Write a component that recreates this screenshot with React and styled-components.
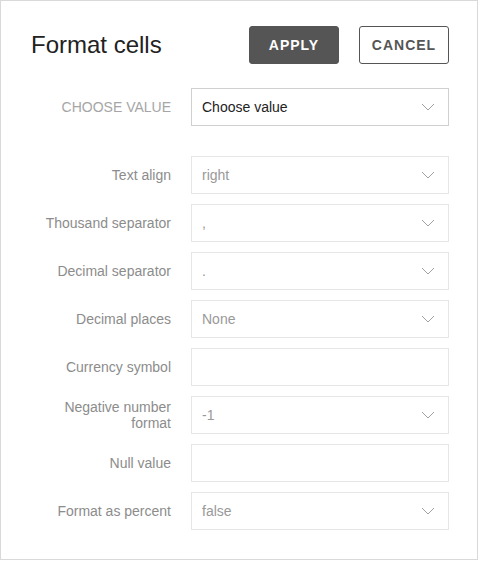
import React from 'react';
import styled, { createGlobalStyle } from 'styled-components';

const GlobalStyle = createGlobalStyle`
    body {
        margin: 0;
        background: #fff;
        font-family: "Liberation Sans", Arial, sans-serif;
    }
`;

const Panel = styled.div`
    box-sizing: border-box;
    width: 478px;
    height: 560px;
    border: 1px solid #d9d9d9;
    background: #fff;
    padding: 25px 28px 0 30px;
`;

const Header = styled.div`
    display: flex;
    align-items: center;
    height: 38px;
    margin-bottom: 24px;
`;

const Title = styled.div`
    flex: 1;
    font-size: 24px;
    color: #222;
    line-height: 1;
`;

const Button = styled.button`
    box-sizing: border-box;
    width: 90px;
    height: 38px;
    margin-left: 20px;
    border-radius: 3px;
    border: 1px solid #555;
    background: ${p => (p.$primary ? '#555' : '#fff')};
    color: ${p => (p.$primary ? '#fff' : '#555')};
    font-family: "Liberation Sans", Arial, sans-serif;
    font-weight: bold;
    font-size: 14px;
    letter-spacing: 1px;
    cursor: pointer;
`;

const Row = styled.div`
    display: flex;
    align-items: center;
    margin-bottom: ${p => p.$gap}px;
`;

const Label = styled.div`
    box-sizing: border-box;
    width: 140px;
    margin-right: 20px;
    text-align: right;
    font-size: 14px;
    line-height: 16px;
    color: ${p => (p.$caps ? '#a6a6a6' : '#8c8c8c')};
`;

const Field = styled.div`
    box-sizing: border-box;
    width: 258px;
    height: 38px;
    display: flex;
    align-items: center;
    padding: 0 13px 0 10px;
    border: 1px solid ${p => (p.$strong ? '#d0d0d0' : '#e6e6e6')};
    background: #fff;
    font-size: 14px;
    color: ${p => (p.$strong ? '#222' : '#999')};
`;

const Value = styled.span`
    flex: 1;
`;

const Chevron = () => (
    <svg width="14" height="8" viewBox="0 0 14 8" fill="none">
        <path d="M1 1 L7 7 L13 1" stroke="#a0a0a0" strokeWidth="1" />
    </svg>
);

const rows = [
    { label: 'Text align', value: 'right', select: true },
    { label: 'Thousand separator', value: ',', select: true },
    { label: 'Decimal separator', value: '.', select: true },
    { label: 'Decimal places', value: 'None', select: true },
    { label: 'Currency symbol', value: '' },
    { label: 'Negative number format', value: '-1', select: true },
    { label: 'Null value', value: '' },
    { label: 'Format as percent', value: 'false', select: true },
];

export default function App() {
    return (
        <>
            <GlobalStyle />
            <Panel>
                <Header>
                    <Title>Format cells</Title>
                    <Button $primary>APPLY</Button>
                    <Button>CANCEL</Button>
                </Header>
                <Row $gap={30}>
                    <Label $caps>CHOOSE VALUE</Label>
                    <Field $strong>
                        <Value>Choose value</Value>
                        <Chevron />
                    </Field>
                </Row>
                {rows.map(r => (
                    <Row key={r.label} $gap={10}>
                        <Label>{r.label}</Label>
                        <Field>
                            <Value>{r.value}</Value>
                            {r.select && <Chevron />}
                        </Field>
                    </Row>
                ))}
            </Panel>
        </>
    );
}
